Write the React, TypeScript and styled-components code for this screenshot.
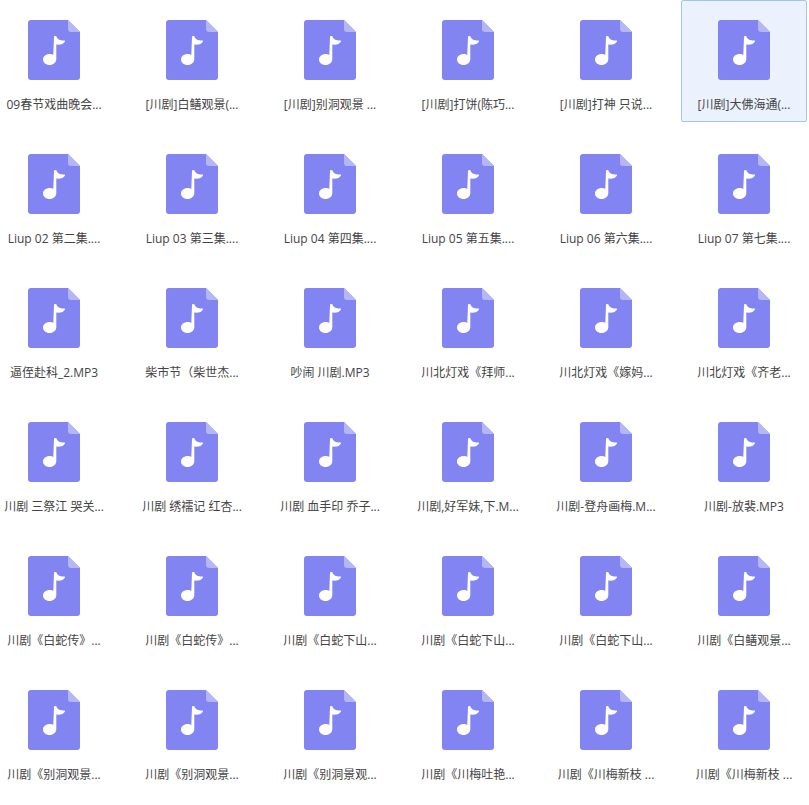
import React from "react";
import styled, { createGlobalStyle } from "styled-components";

const GlobalStyle = createGlobalStyle`
  html, body {
    margin: 0;
    padding: 0;
    background: #ffffff;
    overflow: hidden;
  }
`;

const Grid = styled.div`
  display: grid;
  grid-template-columns: repeat(6, 126px);
  grid-auto-rows: 122px;
  gap: 12px;
  margin-left: -9px;
  width: 816px;
  font-family: "Open Sans", "Noto Sans CJK SC", sans-serif;
`;

const Tile = styled.div<{ $selected?: boolean }>`
  box-sizing: border-box;
  display: flex;
  flex-direction: column;
  align-items: center;
  padding-top: ${(p) => (p.$selected ? 19 : 20)}px;
  border-radius: 2px;
  border: ${(p) => (p.$selected ? "1px solid #a3c5ea" : "none")};
  background: ${(p) => (p.$selected ? "#ebf2fd" : "transparent")};
`;

const Name = styled.div`
  margin-top: 15px;
  font-size: 12px;
  line-height: 20px;
  color: #444444;
  white-space: nowrap;
  text-align: center;
`;

const AudioIcon = () => (
  <svg width="52" height="60" viewBox="0 0 52 60" aria-hidden="true">
    <path
      d="M3 0H40L52 12V57a3 3 0 0 1-3 3H3a3 3 0 0 1-3-3V3a3 3 0 0 1 3-3Z"
      fill="#8285f1"
    />
    <path d="M40 0L52 12H43a3 3 0 0 1-3-3Z" fill="#b4b6f8" />
    <path
      d="M26 17a1 1 0 0 1 1-1h.6c.5 0 .9.3 1 .8.7 2.2 3 3.8 7.7 3.8.6 0 .9.4.7.8-1.2 2.3-4 3.6-8.7 3.2V39c0 3.6-3 6-6.8 6-3.6 0-6.5-2.4-6.5-5.5s2.9-5.5 6.7-5.5c1.4 0 2.7.3 3.6 1Z"
      fill="#ffffff"
    />
  </svg>
);

const files: string[] = [
  "09春节戏曲晚会...",
  "[川剧]白鳝观景(...",
  "[川剧]别洞观景 ...",
  "[川剧]打饼(陈巧...",
  "[川剧]打神 只说...",
  "[川剧]大佛海通(...",
  "Liup 02 第二集....",
  "Liup 03 第三集....",
  "Liup 04 第四集....",
  "Liup 05 第五集....",
  "Liup 06 第六集....",
  "Liup 07 第七集....",
  "逼侄赴科_2.MP3",
  "柴市节（柴世杰...",
  "吵闹 川剧.MP3",
  "川北灯戏《拜师...",
  "川北灯戏《嫁妈...",
  "川北灯戏《齐老...",
  "川剧 三祭江 哭关...",
  "川剧 绣襦记 红杏...",
  "川剧 血手印 乔子...",
  "川剧,好军妹,下.M...",
  "川剧-登舟画梅.M...",
  "川剧-放裴.MP3",
  "川剧《白蛇传》...",
  "川剧《白蛇传》...",
  "川剧《白蛇下山...",
  "川剧《白蛇下山...",
  "川剧《白蛇下山...",
  "川剧《白鳝观景...",
  "川剧《别洞观景...",
  "川剧《别洞观景...",
  "川剧《别洞景观...",
  "川剧《川梅吐艳...",
  "川剧《川梅新枝 ...",
  "川剧《川梅新枝 ...",
];

export default function App() {
  return (
    <>
      <GlobalStyle />
      <Grid>
        {files.map((name, i) => (
          <Tile key={i} $selected={i === 5}>
            <AudioIcon />
            <Name>{name}</Name>
          </Tile>
        ))}
      </Grid>
    </>
  );
}
